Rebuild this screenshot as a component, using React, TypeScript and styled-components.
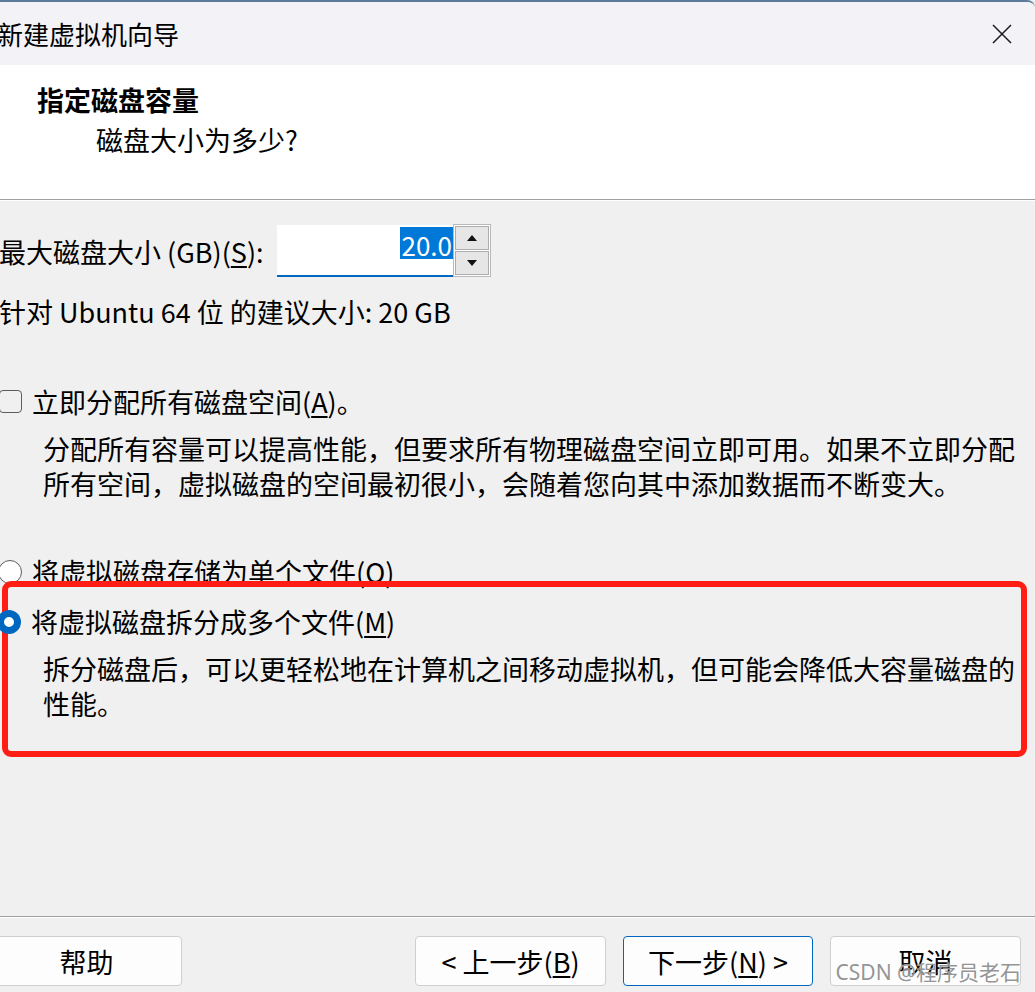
import React from 'react';
import styled, { createGlobalStyle } from 'styled-components';

const GlobalStyle = createGlobalStyle`
  html, body { margin: 0; padding: 0; background: #f0f0f0; overflow: hidden; }
  body { font-family: "Noto Sans CJK SC", "Noto Sans", sans-serif; color: #000; }
  * { box-sizing: border-box; }
`;

const Window = styled.div`
  position: relative;
  width: 1045px;
  height: 992px;
  margin-left: -10px;
  display: flex;
  flex-direction: column;
  background: #f0f0f0;
  border-top: 2px solid #5a7b9c;
  border-top-right-radius: 8px;
  overflow: hidden;
`;

const TitleBar = styled.div`
  height: 63px;
  flex: none;
  background: #f2f2f7;
  display: flex;
  align-items: center;
  justify-content: space-between;
  padding: 0 23px 0 7px;
`;

const TitleText = styled.div`
  font-size: 26px;
  line-height: 34px;
`;

const CloseIcon = styled.svg`
  width: 20px;
  height: 20px;
  display: block;
`;

const Header = styled.div`
  flex: none;
  height: 135px;
  background: #fff;
  border-bottom: 1px solid #a0a0a0;
  box-shadow: 0 1px 0 #fff;
  padding: 17px 0 0 47px;
`;

const HeaderTitle = styled.div`
  font-size: 27px;
  font-weight: 700;
  line-height: 36px;
`;

const HeaderSub = styled.div`
  font-size: 27px;
  line-height: 36px;
  margin-top: 4px;
  padding-left: 59px;
`;

const Body = styled.div`
  flex: 1;
  padding: 25px 0 0 9px;
  font-size: 27px;
  line-height: 35px;
`;

const SizeRow = styled.div`
  display: flex;
  align-items: flex-start;
  height: 52px;
`;

const SizeLabel = styled.div`
  width: 278px;
  height: 52px;
  display: flex;
  align-items: center;
  white-space: nowrap;
`;

const Field = styled.div`
  width: 176px;
  height: 52px;
  background: #fff;
  border-bottom: 2px solid #0067c0;
  display: flex;
  justify-content: flex-end;
  align-items: flex-start;
  padding-top: 2px;
`;

const Selected = styled.span`
  background: #0078d7;
  color: #fff;
  font-size: 26px;
  line-height: 32px;
  height: 32px;
  padding: 2px 1px 0 1px;
  display: block;
`;

const Spinner = styled.div`
  width: 38px;
  height: 53px;
  margin-top: -1px;
  border: 1px solid #b9b9b9;
  background: #fff;
  display: flex;
  flex-direction: column;
  gap: 1px;
  padding: 1px;
`;

const SpinButton = styled.div`
  flex: 1;
  background: #e6e6e6;
  border: 1px solid #adadad;
  display: flex;
  align-items: center;
  justify-content: center;
`;

const Arrow = styled.svg`
  width: 10px;
  height: 6px;
  display: block;
`;

const Line = styled.div<{ $mt?: number }>`
  margin-top: ${(p) => p.$mt ?? 0}px;
  white-space: nowrap;
`;

const OptionRow = styled.div<{ $mt?: number; $ml?: number }>`
  display: flex;
  align-items: center;
  gap: 10px;
  height: 35px;
  margin-top: ${(p) => p.$mt ?? 0}px;
  margin-left: ${(p) => p.$ml ?? 0}px;
  white-space: nowrap;
`;

const CheckBox = styled.span`
  width: 23px;
  height: 23px;
  border: 1.5px solid #5c5c5c;
  border-radius: 4px;
  flex: none;
`;

const Radio = styled.span<{ $checked?: boolean }>`
  position: relative;
  width: 24px;
  height: 24px;
  border-radius: 50%;
  flex: none;
  border: ${(p) => (p.$checked ? '7px solid #0067c0' : '1.5px solid #5c5c5c')};
  background: #fff;
`;

const Description = styled.div<{ $pl: number }>`
  margin-top: 12px;
  padding-left: ${(p) => p.$pl}px;
  white-space: nowrap;
`;

const Highlight = styled.div`
  position: relative;
  margin: -8px 8px 0 3px;
  border: 6px solid #ff1d14;
  border-radius: 9px;
  padding: 17px 0 30px 0;
`;

const Key = styled.span`
  text-decoration: underline;
  text-underline-offset: 3px;
  text-decoration-thickness: 1.5px;
`;

const Footer = styled.div`
  flex: none;
  height: 76px;
  border-top: 1px solid #a0a0a0;
  box-shadow: inset 0 1px 0 #fff;
  display: flex;
  align-items: flex-start;
  padding: 19px 14px 0 1px;
  gap: 17px;
`;

const Button = styled.div<{ $primary?: boolean; $push?: boolean }>`
  width: ${(p) => (p.$primary ? 190 : 191)}px;
  height: 50px;
  background: #fdfdfd;
  border: ${(p) => (p.$primary ? '1.5px solid #0067c0' : '1px solid #cfcfcf')};
  border-radius: 4px;
  display: flex;
  align-items: center;
  justify-content: center;
  font-size: 27px;
  line-height: 35px;
  white-space: nowrap;
  margin-left: ${(p) => (p.$push ? 'auto' : '0')};
`;

const Watermark = styled.div`
  position: absolute;
  right: 14px;
  bottom: 6px;
  font-family: "Noto Sans", "Noto Sans CJK SC", sans-serif;
  font-size: 21px;
  line-height: 28px;
  color: rgba(120, 120, 120, 0.8);
  text-shadow: 0 0 1px #fff;
  white-space: nowrap;
`;

export default function App() {
  return (
    <>
      <GlobalStyle />
      <Window>
        <TitleBar>
          <TitleText>新建虚拟机向导</TitleText>
          <CloseIcon viewBox="0 0 20 20">
            <path d="M1 1 L19 19 M19 1 L1 19" stroke="#1b1b1b" strokeWidth="1.5" fill="none" />
          </CloseIcon>
        </TitleBar>
        <Header>
          <HeaderTitle>指定磁盘容量</HeaderTitle>
          <HeaderSub>磁盘大小为多少?</HeaderSub>
        </Header>
        <Body>
          <SizeRow>
            <SizeLabel>
              最大磁盘大小 (GB)(<Key>S</Key>):
            </SizeLabel>
            <Field>
              <Selected>20.0</Selected>
            </Field>
            <Spinner>
              <SpinButton>
                <Arrow viewBox="0 0 10 6">
                  <path d="M5 0 L10 6 L0 6 Z" fill="#111" />
                </Arrow>
              </SpinButton>
              <SpinButton>
                <Arrow viewBox="0 0 10 6">
                  <path d="M0 0 L10 0 L5 6 Z" fill="#111" />
                </Arrow>
              </SpinButton>
            </Spinner>
          </SizeRow>
          <Line $mt={17}>针对 Ubuntu 64 位 的建议大小: 20 GB</Line>
          <OptionRow $mt={55} $ml={0}>
            <CheckBox />
            <span>
              立即分配所有磁盘空间(<Key>A</Key>)。
            </span>
          </OptionRow>
          <Description $pl={44}>
            分配所有容量可以提高性能，但要求所有物理磁盘空间立即可用。如果不立即分配
            <br />
            所有空间，虚拟磁盘的空间最初很小，会随着您向其中添加数据而不断变大。
          </Description>
          <OptionRow $mt={53} $ml={-1}>
            <Radio />
            <span>将虚拟磁盘存储为单个文件(O)</span>
          </OptionRow>
          <Highlight>
            <OptionRow $ml={-11}>
              <Radio $checked />
              <span>
                将虚拟磁盘拆分成多个文件(<Key>M</Key>)
              </span>
            </OptionRow>
            <Description $pl={35}>
              拆分磁盘后，可以更轻松地在计算机之间移动虚拟机，但可能会降低大容量磁盘的
              <br />
              性能。
            </Description>
          </Highlight>
        </Body>
        <Footer>
          <Button>帮助</Button>
          <Button $push>
            &lt; 上一步(<Key>B</Key>)
          </Button>
          <Button $primary>
            下一步(<Key>N</Key>) &gt;
          </Button>
          <Button>取消</Button>
        </Footer>
        <Watermark>CSDN @程序员老石</Watermark>
      </Window>
    </>
  );
}
